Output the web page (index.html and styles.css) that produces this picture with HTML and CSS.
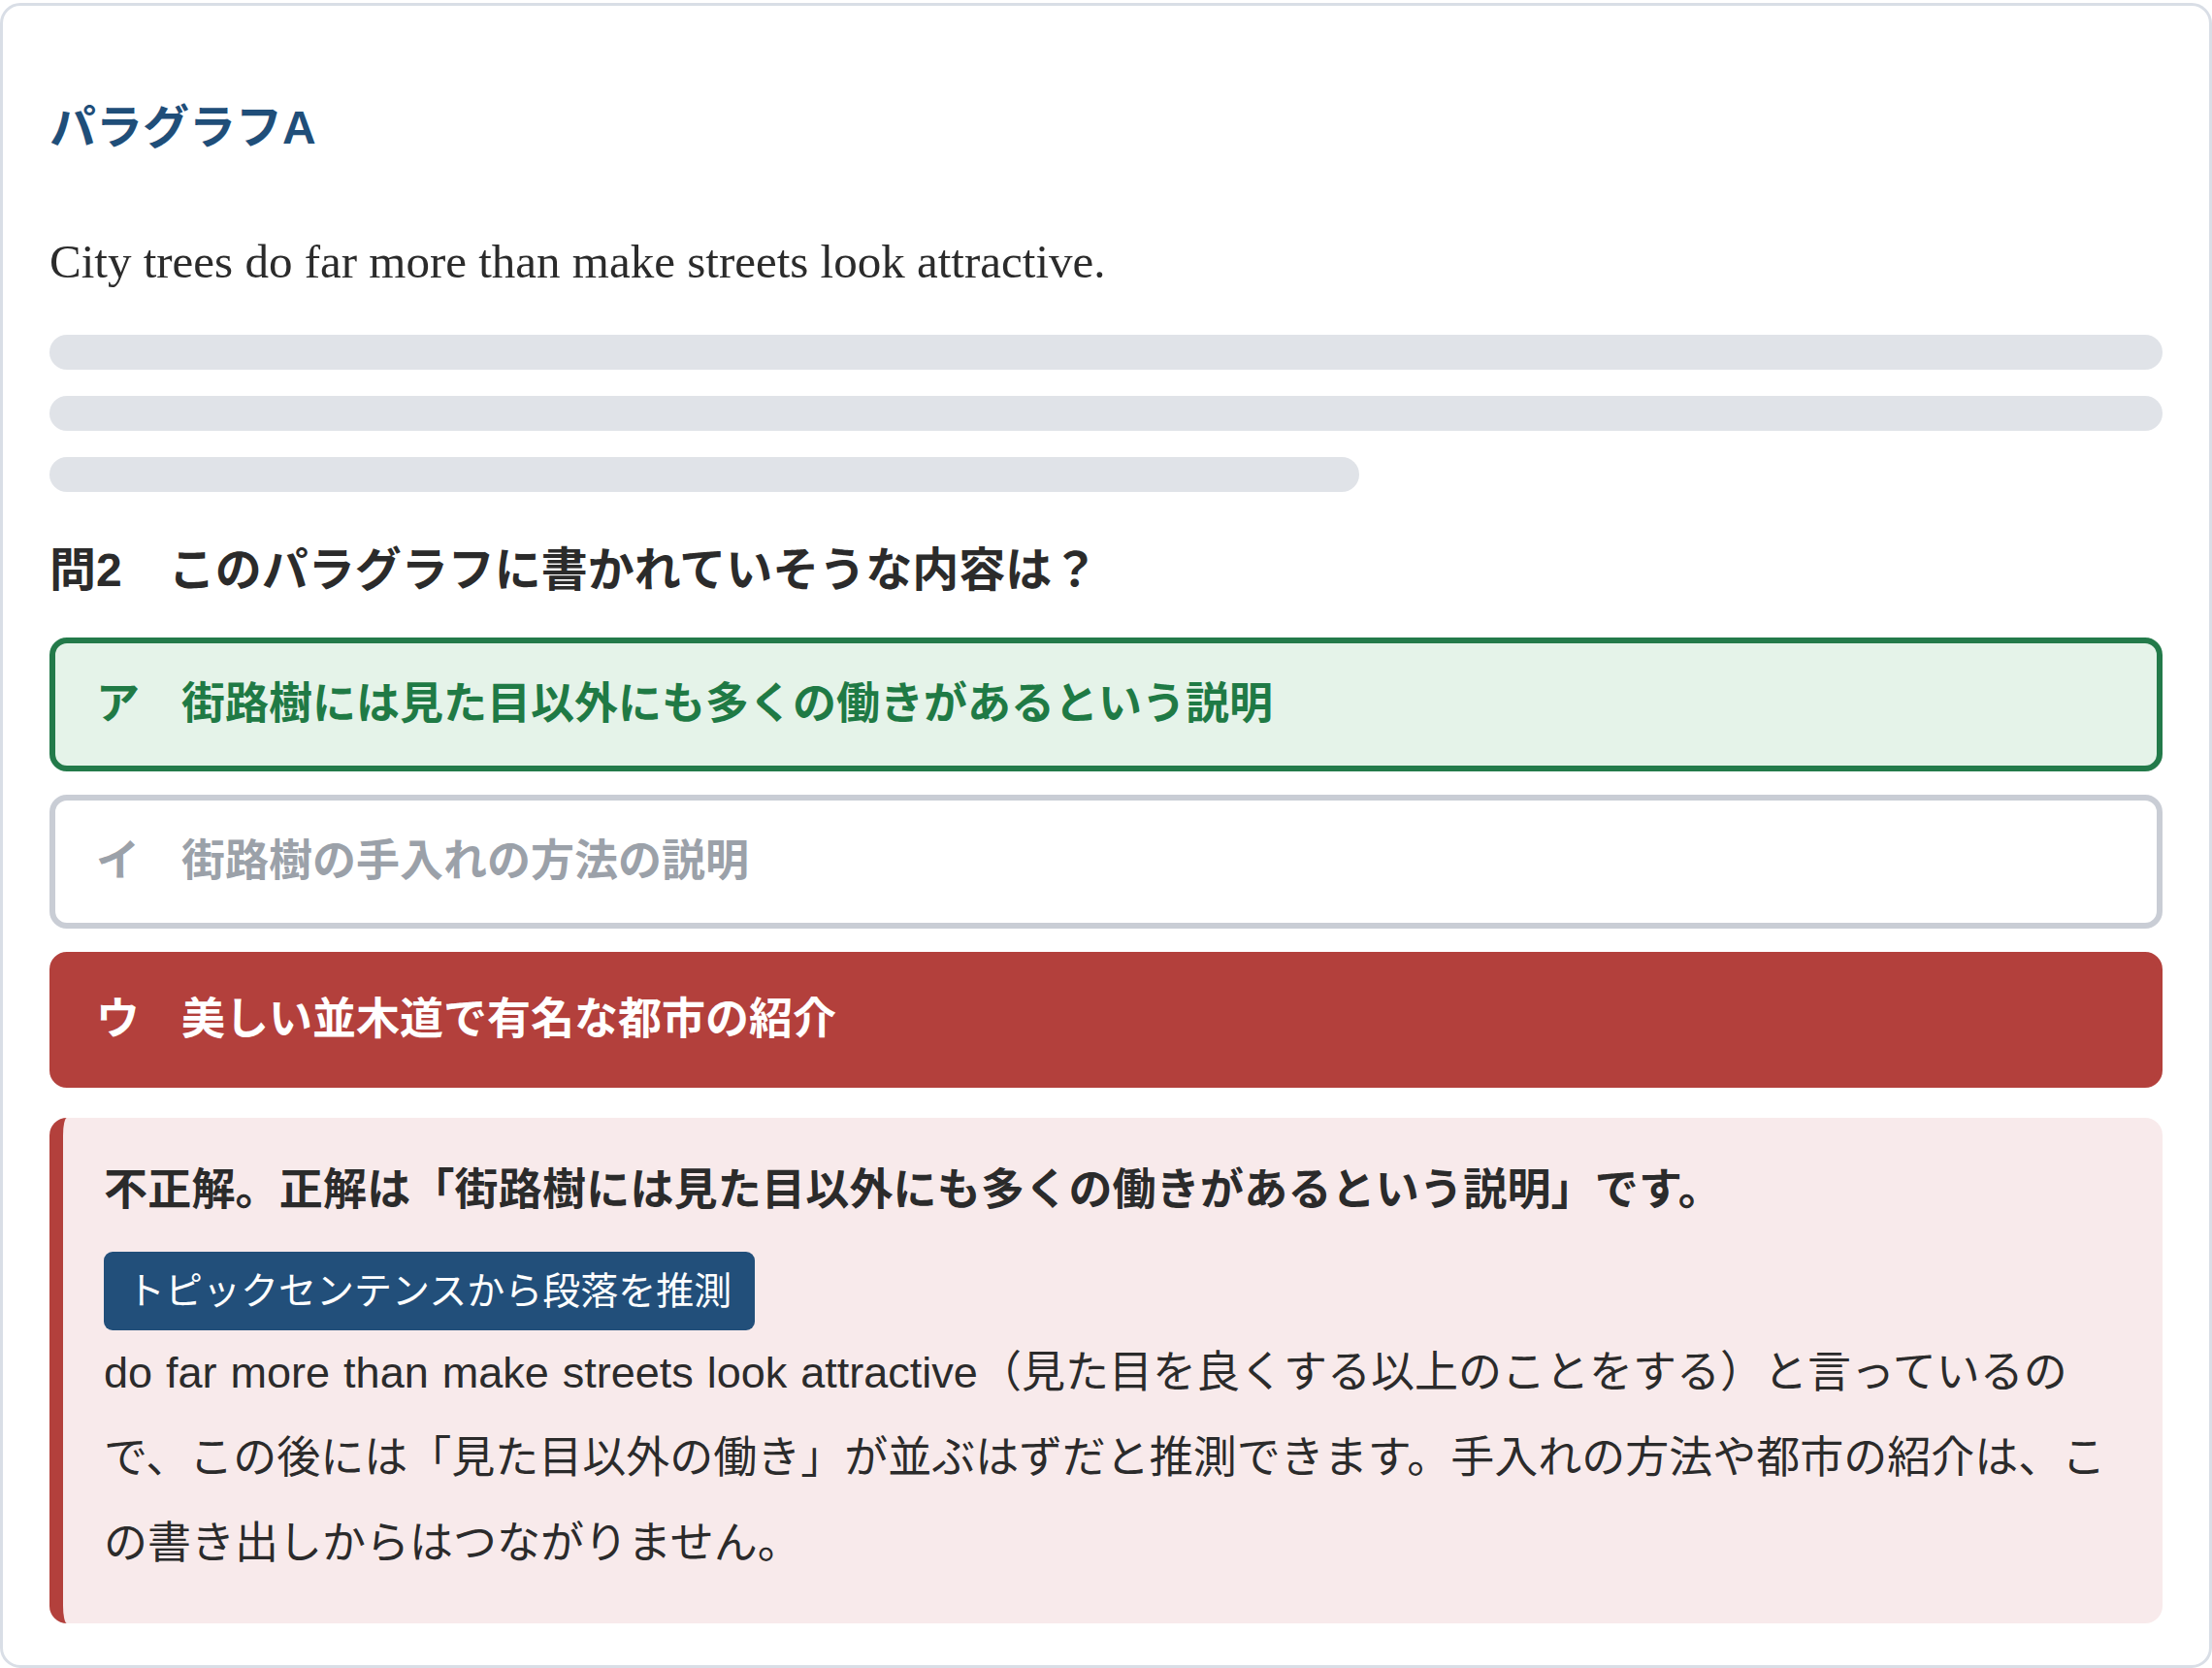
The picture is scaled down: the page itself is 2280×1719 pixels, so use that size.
FILE: index.html
```html
<!DOCTYPE html>
<html lang="ja">
<head>
<meta charset="utf-8">
<title>パラグラフA</title>
<link rel="stylesheet" href="styles.css">
</head>
<body>
<div class="card">
  <h2 class="title">パラグラフA</h2>
  <p class="lead">City trees do far more than make streets look attractive.</p>
  <div class="bars">
    <div class="bar"></div>
    <div class="bar"></div>
    <div class="bar short"></div>
  </div>
  <h3 class="question">問2　このパラグラフに書かれていそうな内容は？</h3>
  <div class="options">
    <div class="option correct"><span class="label">ア</span><span class="text">街路樹には見た目以外にも多くの働きがあるという説明</span></div>
    <div class="option neutral"><span class="label">イ</span><span class="text">街路樹の手入れの方法の説明</span></div>
    <div class="option wrong"><span class="label">ウ</span><span class="text">美しい並木道で有名な都市の紹介</span></div>
  </div>
  <div class="feedback">
    <p class="verdict">不正解。正解は「街路樹には見た目以外にも多くの働きがあるという説明」です。</p>
    <div class="tag-row"><span class="tag">トピックセンテンスから段落を推測</span></div>
    <p class="explain">do far more than make streets look attractive（見た目を良くする以上のことをする）と言っているので、この後には「見た目以外の働き」が並ぶはずだと推測できます。手入れの方法や都市の紹介は、この書き出しからはつながりません。</p>
  </div>
</div>
</body>
</html>
```
FILE: styles.css
```css
html, body {
  margin: 0;
  padding: 0;
  background: #ffffff;
}

body {
  padding-top: 3px;
  font-family: "Liberation Sans", "Noto Sans CJK JP", sans-serif;
  color: #2b2b2b;
}

.card {
  box-sizing: border-box;
  width: 2280px;
  height: 1716px;
  border: 3px solid #d9dee6;
  border-radius: 21px;
  padding: 48px 48px 43px;
  background: #ffffff;
}

.title {
  margin: 48px 0 0;
  font-size: 48px;
  line-height: 60px;
  font-weight: 700;
  color: #1f4e79;
}

.lead {
  margin: 72px 0 0;
  font-family: "Liberation Serif", "Noto Sans CJK JP", serif;
  font-size: 49px;
  line-height: 72px;
  color: #2b2b2b;
}

.bars {
  margin-top: 39px;
  display: flex;
  flex-direction: column;
  gap: 27px;
}

.bar {
  height: 36px;
  border-radius: 18px;
  background: #e0e3e8;
}

.bar.short {
  width: 62%;
}

.question {
  margin: 51px 0 0;
  font-size: 48px;
  line-height: 60px;
  font-weight: 700;
  color: #2b2b2b;
}

.options {
  margin-top: 39px;
  display: flex;
  flex-direction: column;
  gap: 24px;
}

.option {
  display: flex;
  align-items: center;
  box-sizing: border-box;
  height: 138px;
  padding: 0 42px;
  border: 6px solid transparent;
  border-radius: 18px;
  font-size: 45px;
  line-height: 72px;
  font-weight: 700;
}

.option .label {
  width: 88px;
  flex: none;
}

.option.correct {
  background: #e5f3e9;
  border-color: #237a4a;
  color: #1f7a45;
}

.option.neutral {
  background: #ffffff;
  border-color: #c9cdd5;
  color: #9ba1a9;
}

.option.wrong {
  height: 140px;
  background: #b3403c;
  border-color: #b3403c;
  color: #ffffff;
}

.feedback {
  margin-top: 31px;
  box-sizing: border-box;
  height: 521px;
  padding: 39px 42px 38px;
  border-left: 14px solid #b3403c;
  border-radius: 18px;
  background: #f8eaeb;
}

.verdict {
  margin: 0;
  font-size: 45px;
  line-height: 72px;
  font-weight: 700;
  letter-spacing: 0.2px;
  color: #2b2b2b;
}

.tag-row {
  display: flex;
  margin-top: 27px;
}

.tag {
  display: block;
  padding: 9px 24px;
  border-radius: 9px;
  background: #224f7a;
  color: #ffffff;
  font-size: 39px;
  line-height: 63px;
}

.explain {
  margin: 0;
  font-size: 45px;
  line-height: 88px;
  word-spacing: 1.5px;
  color: #2b2b2b;
}
```
